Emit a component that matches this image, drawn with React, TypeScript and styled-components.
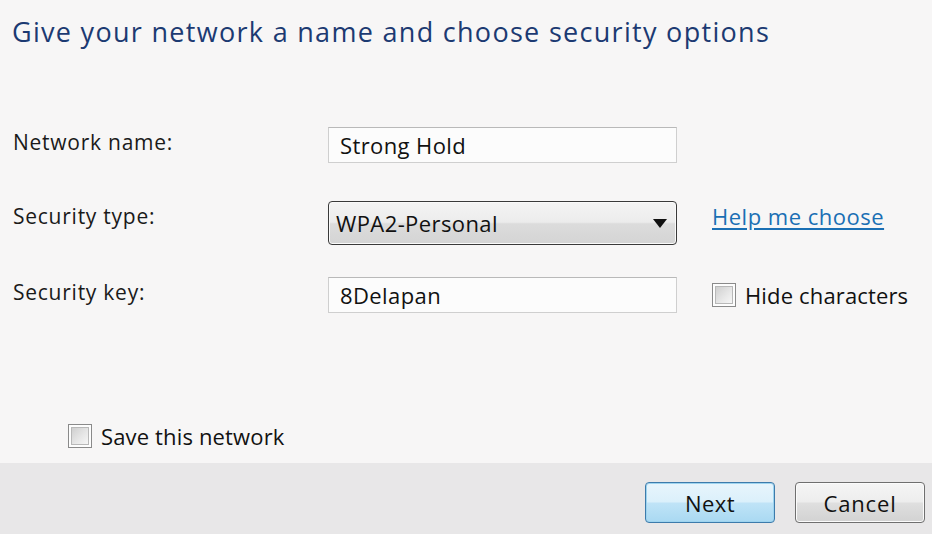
import React from "react";
import styled, { createGlobalStyle } from "styled-components";

const Global = createGlobalStyle`
  html, body { margin: 0; padding: 0; }
  body {
    background: #f7f6f6;
    font-family: "Open Sans", "Noto Sans", sans-serif;
    color: #1a1a1a;
  }
`;

const Window = styled.div`
  width: 932px;
  height: 534px;
  display: flex;
  flex-direction: column;
  overflow: hidden;
`;

const Content = styled.div`
  height: 463px;
  display: flex;
  flex-direction: column;
  background: #f7f6f6;
  box-sizing: border-box;
  padding: 12px 0 0 12px;
`;

const Title = styled.h1`
  margin: 0;
  font-weight: 400;
  font-size: 27px;
  letter-spacing: 1.3px;
  color: #1c3a72;
  line-height: 40px;
  white-space: nowrap;
`;

const Form = styled.div`
  margin-top: 75px;
  padding-left: 1px;
  display: grid;
  grid-template-columns: 315px 349px auto;
  align-items: center;
`;

const Label = styled.div<{ $mt?: number }>`
  font-size: 21px;
  letter-spacing: 0.75px;
  color: #1a1a1a;
  margin-top: ${(p) => p.$mt ?? 0}px;
  align-self: start;
  line-height: 30px;
`;

const TextBox = styled.div<{ $mt?: number }>`
  height: 36px;
  box-sizing: border-box;
  border: 1px solid #cfcfcf;
  border-top-color: #b9b9b9;
  background: #fcfcfc;
  font-size: 22px;
  letter-spacing: 0.4px;
  padding-left: 11px;
  display: flex;
  align-items: center;
  color: #111;
  margin-top: ${(p) => p.$mt ?? 0}px;
`;

const Select = styled.div<{ $mt?: number }>`
  height: 44px;
  box-sizing: border-box;
  border: 1.5px solid #3a3a3a;
  border-radius: 4px;
  background: linear-gradient(#f4f4f4 0%, #ececec 48%, #dcdcdc 52%, #d4d4d4 100%);
  box-shadow: inset 0 0 0 1px #fafafa;
  font-size: 22px;
  letter-spacing: 0.4px;
  padding: 0 9px 0 7px;
  display: flex;
  align-items: center;
  justify-content: space-between;
  color: #111;
  margin-top: ${(p) => p.$mt ?? 0}px;
`;

const Arrow = styled.span`
  width: 0;
  height: 0;
  border-left: 7.5px solid transparent;
  border-right: 7.5px solid transparent;
  border-top: 9px solid #111;
`;

const Side = styled.div<{ $mt?: number; $top?: boolean }>`
  margin-top: ${(p) => p.$mt ?? 0}px;
  padding-left: 35px;
  display: flex;
  align-items: center;
  align-self: ${(p) => (p.$top ? "start" : "center")};
`;

const Link = styled.a`
  color: #1a6fb4;
  text-decoration: underline;
  text-underline-offset: 3px;
  font-size: 22px;
  letter-spacing: 0.5px;
  line-height: 30px;
  cursor: pointer;
`;

const CheckRow = styled.label`
  display: flex;
  align-items: center;
  gap: 9px;
  font-size: 22px;
  letter-spacing: 0.15px;
  color: #111;
`;

const Box = styled.span`
  width: 24px;
  height: 24px;
  box-sizing: border-box;
  border: 1.5px solid #8a8a8a;
  background: #fdfdfd;
  padding: 2px;
  display: inline-flex;
  flex-shrink: 0;
  &::after {
    content: "";
    flex: 1;
    border: 1px solid #b8b8b8;
    background: linear-gradient(135deg, #cfcfcf 0%, #e6e6e6 55%, #f6f6f6 100%);
  }
`;

const SaveRow = styled.div`
  margin-top: auto;
  margin-bottom: 12px;
  padding-left: 56px;
`;

const Footer = styled.div`
  flex: 1;
  background: #e8e7e8;
  display: flex;
  justify-content: flex-end;
  align-items: flex-start;
  padding: 19px 7px 0 0;
  gap: 20px;
`;

const Button = styled.button<{ $primary?: boolean }>`
  width: 130px;
  height: 41px;
  box-sizing: border-box;
  border-radius: 4px;
  font-family: "Open Sans", "Noto Sans", sans-serif;
  font-size: 22px;
  letter-spacing: ${(p) => (p.$primary ? 0.4 : 0.85)}px;
  color: #111;
  padding: 0;
  border: 1.5px solid ${(p) => (p.$primary ? "#3d7bab" : "#6f6f6f")};
  background: ${(p) =>
    p.$primary
      ? "linear-gradient(#e8f5fc 0%, #dbf0fb 48%, #bfe3f7 52%, #a9d9f2 100%)"
      : "linear-gradient(#f5f5f5 0%, #ededed 48%, #dfdfdf 52%, #d2d2d2 100%)"};
  box-shadow: inset 0 0 0 1px ${(p) => (p.$primary ? "#9ed4ef" : "#fbfbfb")};
`;

export default function App() {
  return (
    <Window>
      <Global />
      <Content>
        <Title>Give your network a name and choose security options</Title>
        <Form>
          <Label>Network name:</Label>
          <TextBox>Strong Hold</TextBox>
          <div />
          <Label $mt={38}>Security type:</Label>
          <Select $mt={38}>
            <span>WPA2-Personal</span>
            <Arrow />
          </Select>
          <Side $mt={38} $top>
            <Link>Help me choose</Link>
          </Side>
          <Label $mt={32}>Security key:</Label>
          <TextBox $mt={32}>8Delapan</TextBox>
          <Side $mt={32}>
            <CheckRow>
              <Box />
              Hide characters
            </CheckRow>
          </Side>
        </Form>
        <SaveRow>
          <CheckRow>
            <Box />
            Save this network
          </CheckRow>
        </SaveRow>
      </Content>
      <Footer>
        <Button $primary>Next</Button>
        <Button>Cancel</Button>
      </Footer>
    </Window>
  );
}
